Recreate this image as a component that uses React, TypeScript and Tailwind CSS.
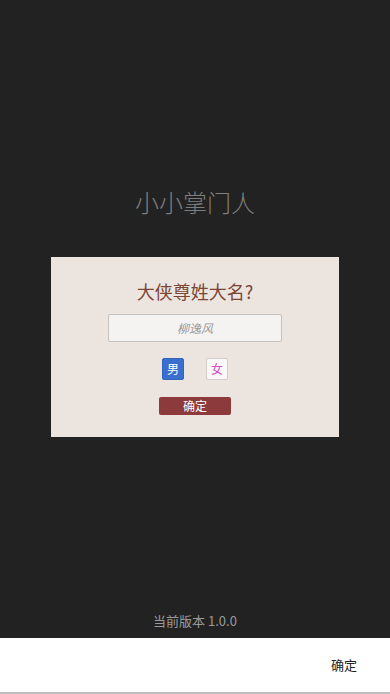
export default function App() {
  return (
    <div
      className="w-[390px] h-[694px] flex flex-col bg-[#222222] overflow-hidden"
      style={{ fontFamily: '"Noto Sans CJK SC", "Noto Sans", sans-serif' }}
    >
      <div className="flex-1 flex flex-col items-center">
        <div className="h-[184px]" />
        <div className="text-[24px] leading-[36px] text-[#7e7e7e] font-light">小小掌门人</div>
        <div className="h-[37px]" />
        <div className="w-[288px] h-[180px] bg-[#ece5df] flex flex-col items-center">
          <div className="mt-[22px] text-[18px] leading-[24px] text-[#7b4535]">大侠尊姓大名?</div>
          <div className="mt-[11px] w-[174px] h-[28px] bg-[#f5f3f2] border border-[#c6c1bd] rounded-[2px] flex items-center justify-center text-[12px] italic text-[#999999]">
            柳逸风
          </div>
          <div className="mt-[16px] flex gap-[22px]">
            <div className="w-[22px] h-[22px] bg-[#3b6fcf] rounded-[2px] border border-[#3463ba] flex items-center justify-center text-[12px] text-white">
              男
            </div>
            <div className="w-[22px] h-[22px] bg-[#faf8f8] rounded-[2px] border border-[#d2cdca] flex items-center justify-center text-[12px] text-[#d24fc5]">
              女
            </div>
          </div>
          <div className="mt-[17px] w-[72px] h-[18px] bg-[#8c3a3b] rounded-[2px] flex items-center justify-center text-[12px] text-white">
            确定
          </div>
        </div>
        <div className="flex-1" />
        <div className="text-[13px] leading-[20px] text-[#9a9a9a] mb-[7px]">当前版本 1.0.0</div>
      </div>
      <div className="h-[56px] bg-white border-b-[2px] border-[#bdbdbd] flex items-center justify-end pr-[33px]">
        <span className="text-[13px] text-[#222222]">确定</span>
      </div>
    </div>
  );
}
